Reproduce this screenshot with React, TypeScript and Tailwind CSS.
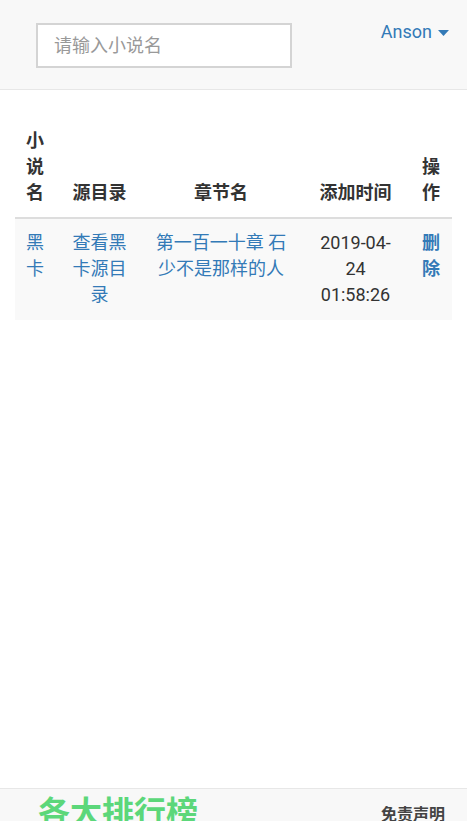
import React from "react";

const font = { fontFamily: 'Roboto, "Noto Sans CJK SC", "Liberation Sans", sans-serif' };

export default function App() {
  return (
    <div className="w-[467px] h-[821px] overflow-hidden bg-white text-[#333]" style={font}>
      {/* navbar */}
      <div className="h-[90px] bg-[#f8f8f8] border-b border-[#e7e7e7] flex items-start justify-between">
        <div className="pl-[36px] pt-[23px]">
          <input
            placeholder="请输入小说名"
            className="w-[256px] h-[45px] border-2 border-[#d4d4d4] bg-white px-[16px] text-[18px] placeholder:text-[#999] outline-none"
            style={font}
          />
        </div>
        <div className="pt-[19px] pr-[18px] flex items-center gap-[6px] text-[#337ab7] text-[18px] leading-[26px]">
          <span>Anson</span>
          <svg width="11" height="6" viewBox="0 0 11 6" className="mt-[2px]">
            <path d="M0 0 H11 L5.5 6 Z" fill="#337ab7" />
          </svg>
        </div>
      </div>

      {/* table */}
      <div className="h-[698px] px-[15px] pt-[28px]">
        <table className="w-[437px] table-fixed border-collapse text-[18px] leading-[26px]">
          <colgroup>
            <col className="w-[41px]" />
            <col className="w-[87px]" />
            <col className="w-[156px]" />
            <col className="w-[113px]" />
            <col className="w-[40px]" />
          </colgroup>
          <thead>
            <tr className="border-b-[2px] border-[#ddd]">
              <th className="pl-[11px] pr-[10px] pt-[10px] pb-[11px] align-bottom text-left font-bold">小说名</th>
              <th className="px-[10px] pt-[10px] pb-[11px] align-bottom text-center font-bold">源目录</th>
              <th className="px-[10px] pt-[10px] pb-[11px] align-bottom text-center font-bold">章节名</th>
              <th className="px-[10px] pt-[10px] pb-[11px] align-bottom text-center font-bold">添加时间</th>
              <th className="px-[10px] pt-[10px] pb-[11px] align-bottom text-left font-bold">操作</th>
            </tr>
          </thead>
          <tbody>
            <tr className="bg-[#f9f9f9]">
              <td className="pl-[11px] pr-[10px] pt-[11px] pb-[12px] align-top text-left text-[#337ab7]">黑卡</td>
              <td className="px-[10px] pt-[11px] pb-[12px] align-top text-center text-[#337ab7]">查看黑卡源目录</td>
              <td className="px-[10px] pt-[11px] pb-[12px] align-top text-center text-[#337ab7]">第一百一十章 石少不是那样的人</td>
              <td className="px-[10px] pt-[11px] pb-[12px] align-top text-center text-[#333]">
                <div className="w-[84px] mx-auto">2019-04-24 01:58:26</div>
              </td>
              <td className="px-[10px] pt-[11px] pb-[12px] align-top text-left text-[#337ab7] font-bold">删除</td>
            </tr>
          </tbody>
        </table>
      </div>

      {/* footer */}
      <div className="h-[33px] bg-[#f8f8f8] border-t border-[#e7e7e7] flex items-start justify-between">
        <div className="pl-[38px] pt-[4px] text-[32px] leading-[40px] font-bold text-[#5cd77a]">各大排行榜</div>
        <div className="pr-[22px] pt-[15px] text-[16px] leading-[22px] font-bold text-[#444]">免责声明</div>
      </div>
    </div>
  );
}
